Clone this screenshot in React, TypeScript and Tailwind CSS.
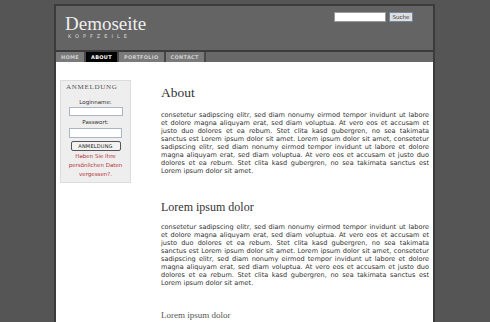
const body =
  "consetetur sadipscing elitr, sed diam nonumy eirmod tempor invidunt ut labore et dolore magna aliquyam erat, sed diam voluptua. At vero eos et accusam et justo duo dolores et ea rebum. Stet clita kasd gubergren, no sea takimata sanctus est Lorem ipsum dolor sit amet. Lorem ipsum dolor sit amet, consetetur sadipscing elitr, sed diam nonumy eirmod tempor invidunt ut labore et dolore magna aliquyam erat, sed diam voluptua. At vero eos et accusam et justo duo dolores et ea rebum. Stet clita kasd gubergren, no sea takimata sanctus est Lorem ipsum dolor sit amet.";

const tabs = ["HOME", "ABOUT", "PORTFOLIO", "CONTACT"];

const serif = "font-['Liberation_Serif','Times_New_Roman',serif]";
const sans = "font-['DejaVu_Sans',Verdana,sans-serif]";

function LoginBox() {
  return (
    <div className={`w-[71px] h-[103px] bg-[#eeeeee] border border-[#dcdcdc] ${sans}`}>
      <div className={`${serif} text-[7px] leading-[8px] tracking-[0.7px] text-[#555] pl-[5px] pt-[2px]`}>
        ANMELDUNG
      </div>
      <div className="flex flex-col items-center">
        <label className="text-[5.5px] leading-[7px] text-[#333] mt-[8px]">Loginname:</label>
        <input className="w-[54px] h-[9px] bg-white border border-[#a9b6c6] mt-[1px] outline-none" />
        <label className="text-[5.5px] leading-[7px] text-[#333] mt-[3px]">Passwort:</label>
        <input
          type="password"
          className="w-[53px] h-[10px] bg-white border border-[#a9b6c6] mt-[2px] outline-none"
        />
        <button className="w-[50px] h-[10px] mt-[3px] bg-[#f2f2f2] border border-[#555] rounded-[2px] text-[5px] leading-[8px] text-[#222] tracking-[0.2px]">
          ANMELDUNG
        </button>
        <p className="text-[5.5px] leading-[9px] text-[#b83232] text-center mt-[1px]">
          Haben Sie Ihre
          <br />
          persönlichen Daten
          <br />
          vergessen?.
        </p>
      </div>
    </div>
  );
}

export default function App() {
  return (
    <div className="min-h-screen bg-[#555555] pt-[4px] pl-[54px]">
      <div className="w-[381px] border-x-2 border-t-2 border-[#3b3b3b] bg-white">
        {/* Header */}
        <div className="h-[44px] bg-[#646464] flex justify-between">
          <div className="pl-[9px] pt-[7px]">
            <div className={`${serif} text-[19px] leading-[21px] text-[#eeeeee]`}>Demoseite</div>
            <div className={`${sans} text-[5px] leading-[5px] tracking-[4px] text-[#dddddd] pl-[3px]`}>
              KOPFZEILE
            </div>
          </div>
          <div className="flex items-start gap-[3px] pt-[6px] pr-[20px]">
            <input className="w-[52px] h-[10px] bg-white border border-[#9a9a9a] outline-none" />
            <button className={`${sans} w-[24px] h-[10px] bg-[#dedede] border border-[#6f86a6] text-[5.5px] leading-[8px] text-[#333]`}>
              Suche
            </button>
          </div>
        </div>

        {/* Navigation */}
        <div className="h-[12px] border-t-2 border-[#3b3b3b] bg-[#686868] flex">
          {tabs.map((t) => (
            <div
              key={t}
              className={`${sans} h-[10px] px-[5px] border-r-2 border-[#474747] text-[5px] leading-[10px] font-bold tracking-[0.3px] ${
                t === "ABOUT" ? "bg-black text-white" : "bg-[#7a7a7a] text-[#cfcfcf]"
              }`}
            >
              {t}
            </div>
          ))}
        </div>

        {/* Content */}
        <div className="flex items-start bg-white pl-[4px] h-[260px]">
          <div className="mt-[18px]">
            <LoginBox />
          </div>
          <div className="ml-[30px] w-[268px] pt-[22px] text-[#333]">
            <h1 className={`${serif} text-[13.5px] leading-[18px]`}>About</h1>
            <p className={`${sans} text-[6.55px] leading-[8px] text-justify mt-[9px]`}>{body}</p>
            <h2 className={`${serif} text-[12px] leading-[18px] mt-[23px]`}>Lorem ipsum dolor</h2>
            <p className={`${sans} text-[6.55px] leading-[8px] text-justify mt-[7px]`}>{body}</p>
            <h3 className={`${serif} text-[9px] leading-[10px] text-[#555] mt-[23px]`}>Lorem ipsum dolor</h3>
          </div>
        </div>
      </div>
    </div>
  );
}
